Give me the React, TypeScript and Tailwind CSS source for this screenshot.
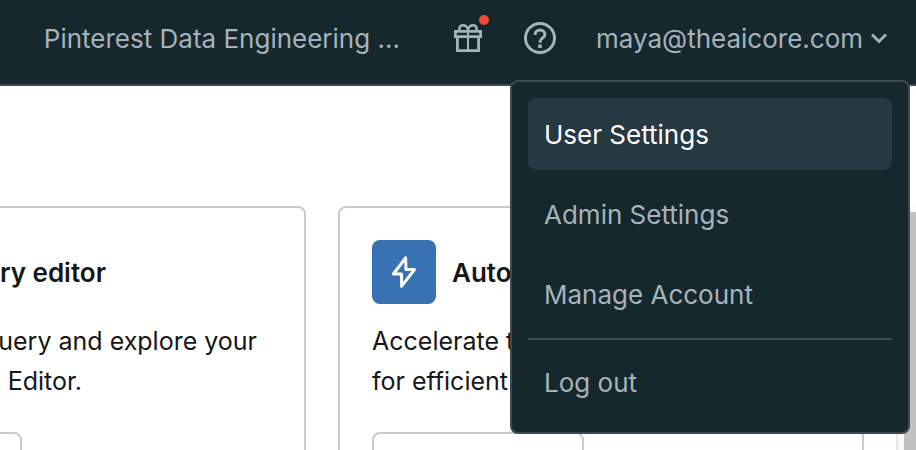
import React from "react";

function GiftIcon() {
  return (
    <svg viewBox="0 0 32 32" className="h-8 w-8" fill="none" stroke="currentColor" strokeWidth="2.8" aria-hidden="true">
      <path d="M3.4 9.4h25.2v5.3H3.4z" />
      <path d="M5.4 14.7v13.9h21.2V14.7" />
      <path d="M16 9.3v19.4" strokeWidth="2" />
      <path d="M7.4 9.3V6.8C7.4 4.6 8.8 3.3 11 3.3 13.6 3.3 15.2 5.2 16 7.6 16.8 5.2 18.4 3.3 21 3.3c2.2 0 3.6 1.3 3.6 3.5v2.5" strokeWidth="2.5" />
    </svg>
  );
}

function HelpIcon() {
  return (
    <svg viewBox="0 0 32 32" className="h-8 w-8" fill="none" stroke="currentColor" strokeWidth="3" aria-hidden="true">
      <circle cx="16" cy="16" r="14.5" />
      <path d="M11.2 13v-.7c0-2.4 2-4.2 4.8-4.2s4.9 1.8 4.9 4.3c0 3.6-4.9 3.8-4.9 7.4v1" />
      <path d="M14.2 22.4h3.6v3.6h-3.6z" fill="currentColor" stroke="none" />
    </svg>
  );
}

function ChevronIcon() {
  return (
    <svg viewBox="0 0 16 16" className="h-4 w-4" fill="none" stroke="currentColor" strokeWidth="2.8" aria-hidden="true">
      <path d="M1 4.5l7 7 7-7" />
    </svg>
  );
}

function BoltIcon() {
  return (
    <svg viewBox="0 0 32 32" className="h-8 w-8" fill="none" stroke="currentColor" strokeWidth="3" strokeLinejoin="round" aria-hidden="true">
      <path d="M17.6 1.8 5.4 18H13.6v12.2L26.5 13.6H18z" />
    </svg>
  );
}

const itemClass = "flex h-[72px] w-full items-center rounded-lg px-4 pt-px text-left";

function UserMenu() {
  return (
    <div className="absolute top-20 right-1.5 z-10 w-[400px] rounded-lg border-2 border-[#3c4a53] bg-[#17272e] px-4 pt-4 pb-3.5">
      <div className="flex flex-col gap-2">
        <button className={`${itemClass} bg-[#263842] text-white`}>User Settings</button>
        <button className={itemClass}>Admin Settings</button>
        <button className={itemClass}>Manage Account</button>
      </div>
      <hr className="mt-2 mb-1.5 border-t-2 border-[#3c4a53]" />
      <button className={itemClass}>Log out</button>
    </div>
  );
}

export default function App() {
  return (
    <div className="flex h-screen flex-col overflow-hidden bg-white font-['Inter','Liberation_Sans',sans-serif] text-[#161616]">
      <header className="relative flex h-[86px] shrink-0 items-center justify-end border-b-2 border-[#3c4a53] bg-[#17272e] pr-[29px] pb-2 text-[26px] whitespace-nowrap text-[#a5b3bc]">
        <button className="mr-[52px]">Pinterest Data Engineering ...</button>
        <button className="relative mr-10" aria-label="What's new">
          <GiftIcon />
          <span className="absolute -top-[7px] -right-[5px] h-2.5 w-2.5 rounded-full bg-[#f04a35]" />
        </button>
        <button className="mr-10" aria-label="Help">
          <HelpIcon />
        </button>
        <button className="flex items-center gap-2">
          maya@theaicore.com
          <ChevronIcon />
        </button>
        <UserMenu />
      </header>

      <main className="flex min-h-0 grow justify-end pt-[120px] text-[25px]">
        <div className="flex gap-8 self-start pr-8">
          <section className="w-[526px] shrink-0 rounded-lg border-2 border-[#cbcbcb] p-8">
            <div className="flex h-16 items-center">
              <h2 className="w-[292px] text-right text-[26px] font-semibold">query editor</h2>
            </div>
            <p className="mt-[17px] leading-10 whitespace-nowrap">
              <span className="block w-[443px] text-right">query and explore your</span>
              <span className="block w-[268px] text-right">Editor.</span>
            </p>
            <button className="mt-[31px] h-16 w-52 rounded-lg border-2 border-[#cbcbcb]" aria-label="Open editor" />
          </section>
          <section className="w-[526px] shrink-0 rounded-lg border-2 border-[#cbcbcb] p-8">
            <div className="flex h-16 items-center gap-4">
              <span className="flex h-16 w-16 items-center justify-center rounded-lg bg-[#3872b2] text-white">
                <BoltIcon />
              </span>
              <h2 className="text-[26px] font-semibold">Auto</h2>
            </div>
            <p className="mt-[17px] leading-10">
              Accelerate the
              <br />
              for efficient
            </p>
            <button className="mt-[31px] h-16 w-[212px] rounded-lg border-2 border-[#cbcbcb]" aria-label="Open" />
          </section>
        </div>
        <div className="w-5 shrink-0 border-l-2 border-[#e8e8e8] bg-[#fafafa] pt-1.5 pl-1.5">
          <div className="h-full rounded-tl-lg bg-[#c1c1c1]" />
        </div>
      </main>
    </div>
  );
}
